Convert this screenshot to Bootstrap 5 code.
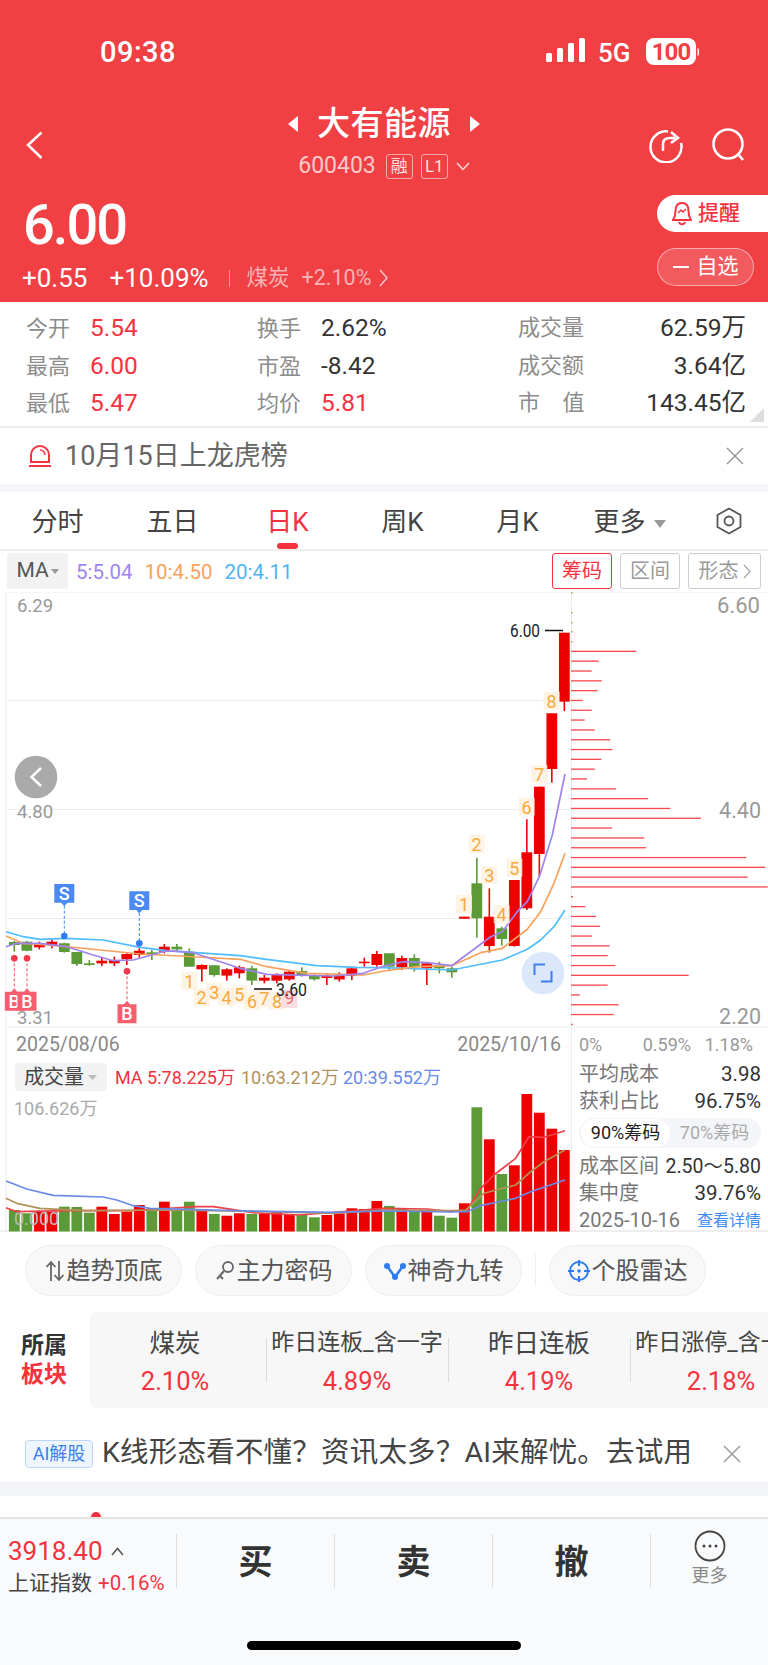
<!DOCTYPE html>
<html lang="zh-CN">
<head>
    <meta charset="UTF-8">
    <meta name="viewport" content="width=device-width, initial-scale=1.0">
    <title>大有能源</title>
    <link href="https://cdn.jsdelivr.net/npm/bootstrap@5.3.0/dist/css/bootstrap.min.css" rel="stylesheet">
    <style>
        body { width: 768px; height: 1665px; overflow: hidden; background: #fff; color: #333; font-family: Roboto, "Noto Sans CJK SC", sans-serif; }
        svg text { font-family: Roboto, "Noto Sans CJK SC", sans-serif; }
        .up { color: #f5333f; }
        .head-box { background: #f04044; color: #fff; height: 302px; }
        .status-row { height: 104px; padding: 34px 68px 0 100px; }
        .clock { font-size: 29px; font-weight: 500; line-height: 36px; letter-spacing: .5px; }
        .status-right { margin-top: 4px; }
        .net { font-size: 26px; font-weight: 500; line-height: 30px; margin: 0 14px 0 13px; width: 34px; }
        .nav-row { height: 86px; padding: 0 21px 0 26px; }
        .title-col { width: 250px; margin-top: -2px; }
        .stock-name { font-size: 33px; font-weight: 500; line-height: 44px; letter-spacing: .5px; margin: 0 19px; }
        .code-line { font-size: 23px; line-height: 26px; margin-top: 7px; color: rgba(255,255,255,.72); }
        .tag-box { display: inline-block; border: 1px solid rgba(255,255,255,.55); border-radius: 3px; height: 25px; width: 27px; font-size: 17px; line-height: 23px; text-align: center; margin-left: 8px; color: rgba(255,255,255,.85); }
        .price-row { height: 112px; }
        .big-price { font-size: 56px; font-weight: 500; line-height: 56px; letter-spacing: -2px; margin: 7px 0 0 23px; }
        .change-line { font-size: 26px; line-height: 30px; margin: 10px 0 0 22px; }
        .change-line .sector { font-size: 21.500px; color: rgba(255,255,255,.6); }
        .split { width: 1px; height: 17px; background: rgba(255,255,255,.45); margin: 0 17px 0 20px; }
        .remind-btn { width: 111px; height: 37px; margin: 5px 0 16px; background: #fff; color: #f5333f; border-radius: 19px 0 0 19px; font-size: 21px; font-weight: 500; padding-left: 15px; gap: 6px; }
        .pick-btn { width: 97px; height: 38px; margin-right: 14px; border: 1px solid rgba(255,255,255,.5); background: rgba(255,255,255,.14); border-radius: 19px; font-size: 21px; gap: 8px; }
        .dash-mark { width: 16px; height: 2px; background: #fff; }
        .stat-box { height: 126px; padding-top: 7px; border-bottom: 2px solid #eee; position: relative; font-size: 24.500px; }
        .stat-line { height: 37.500px; line-height: 37.500px; padding-left: 26px; }
        .stat-cell { width: 231px; }
        .stat-label { color: #8c8c8c; font-size: 22px; display: inline-block; width: 64px; }
        .stat-end { width: 228px; }
        .stat-end .stat-label { width: 68px; }
        .fold-mark { position: absolute; right: 4px; bottom: 4px; width: 0; height: 0; border-left: 14px solid transparent; border-bottom: 14px solid #ddd; }
        .notice-row { height: 56px; padding: 0 24px 0 29px; font-size: 27px; color: #666; }
        .gap-bar { background: #f3f5f8; }
        .tab-row { height: 59px; border-bottom: 2px solid #eee; font-size: 26px; color: #444; }
        .tab-item { width: 115px; text-align: center; position: relative; line-height: 60px; white-space: nowrap; }
        .tab-item.active { color: #f5333f; }
        .tab-item.active::after { content: ""; position: absolute; left: 47px; bottom: 0; width: 21px; height: 6px; border-radius: 3px; background: #f5333f; }
        .drop-mark { display: inline-block; width: 0; height: 0; border: 6px solid transparent; border-top: 8px solid #999; border-bottom: 0; vertical-align: middle; margin-left: 8px; }
        .more-tab { padding-right: 6px; }
        .tool-row { height: 41px; padding: 2px 7px 0; font-size: 20.500px; }
        .ma-text { line-height: 38px; margin-right: 12px; }
        .ma-box { width: 61px; height: 36px; background: #f2f2f2; border-radius: 3px; margin-right: 8px; font-size: 21px; color: #555; }
        .ma-box .drop-mark { border-width: 4px; border-top-width: 5px; border-bottom: 0; margin-left: 2px; }
        .mode-btn { height: 36px; width: 60px; margin-left: 8px; border: 1px solid #ccc; border-radius: 3px; color: #999; font-size: 20px; }
        .mode-btn.on { color: #f5333f; border-color: #f5333f; }
        .chart-svg { display: block; }
        .lower-row { height: 173px; border-bottom: 2px solid #eee; }
        .cost-panel { width: 197px; padding: 2px 7px 0 7px; font-size: 20.500px; color: #333; border-left: 1px solid #eee; }
        .cost-line { height: 27px; line-height: 27px; white-space: nowrap; }
        .cost-line span:first-child { color: #777; font-size: 20px; }
        .cost-line .cost-range { font-size: 19.500px; }
        .cost-line .cost-date { font-size: 21px; }
        .seg-box { height: 30px; background: #f3f5f8; border-radius: 15px; margin: 3px 0 5px; font-size: 18px; color: #aaa; padding: 1px 2px; }
        .seg-on { width: 89px; background: #fff; border-radius: 14px; color: #222; text-align: center; line-height: 27px; }
        .seg-off { flex: 1; text-align: center; line-height: 27px; }
        .chip-row { height: 80px; padding: 13px 0 0 25px; gap: 13px; }
        .chip-item { width: 157px; height: 51px; background: #f8f8f8; border: 1px solid #eee; border-radius: 26px; font-size: 24px; color: #555; gap: 2px; }
        .chip-split { width: 1px; height: 32px; background: #eee; margin-top: 9px; }
        .plate-row { height: 96px; }
        .plate-title { width: 90px; padding: 19px 0 0 21px; font-size: 23px; font-weight: 700; line-height: 29px; }
        .plate-box { flex: 1; background: #f7f7f7; border-radius: 8px 0 0 8px; overflow: hidden; padding-left: 0; }
        .plate-cell { flex: 0 0 182px; width: 182px; text-align: center; white-space: nowrap; position: relative; padding-top: 14px; }
        .plate-cell:first-child { margin-left: -6px; }
        .plate-cell + .plate-cell::before { content: ""; position: absolute; left: 0; top: 26px; height: 44px; width: 1px; background: #ddd; }
        .plate-name { font-size: 25.500px; line-height: 34px; color: #444; }
        .plate-name.tight { font-size: 23px; }
        .plate-pct { font-size: 25.500px; line-height: 36px; margin-top: 3px; }
        .ai-row { height: 74px; padding: 17px 27px 0 25px; }
        .ai-tag { width: 68px; height: 28px; border: 1px solid #bcd6fb; background: #eef5ff; color: #3a7ff0; border-radius: 4px; font-size: 18px; margin-right: 9px; }
        .ai-text { font-size: 28.500px; color: #444; flex: 1; white-space: nowrap; overflow: hidden; letter-spacing: .2px; }
        .dock-gap { height: 21px; position: relative; }
        .dock-dot { position: absolute; left: 91px; bottom: 0; width: 10px; height: 5px; border-radius: 5px 5px 0 0; background: #f5333f; }
        .dock-bar { height: 148px; background: #f9fafc; border-top: 2px solid #e4e4e8; padding-top: 15px; }
        .dock-cols { height: 54px; }
        .index-col { width: 176px; padding-left: 8px; white-space: nowrap; }
        .index-num { font-size: 26px; line-height: 30px; margin-top: 2px; }
        .index-sub { font-size: 21px; line-height: 30px; margin-top: 2px; color: #444; }
        .index-sub .up { font-size: 20.500px; margin-left: 6px; }
        .trade-col { width: 158px; border-left: 1px solid #ddd; text-align: center; font-size: 34px; font-weight: 700; line-height: 56px; color: #333; }
        .more-col { flex: 1; border-left: 1px solid #ddd; text-align: center; font-size: 18px; color: #888; margin-left: 0; }
        .home-bar { width: 274px; height: 9px; border-radius: 5px; background: #000; margin: 53px 0 0 247px; }
    </style>
</head>
<body>
    <div class="head-box">
        <div class="status-row d-flex justify-content-between">
            <div class="clock">09:38</div>
            <div class="d-flex align-items-start status-right">
                <svg width="39" height="24" viewBox="0 0 39 24" class="flex-shrink-0"><g fill="#fff"><rect x="0" y="15" width="6" height="9" rx="1.500"/><rect x="11" y="10" width="6" height="14" rx="1.500"/><rect x="22" y="5" width="6" height="19" rx="1.500"/><rect x="33" y="0" width="6" height="24" rx="1.500"/></g></svg>
                <div class="net">5G</div>
                <svg width="54" height="28" viewBox="0 0 54 28"><rect x="0" y="0" width="50" height="27" rx="8" fill="#fff"/><text x="25" y="21.500" text-anchor="middle" font-size="24" font-weight="700" fill="#f04044" letter-spacing="-1">100</text><path d="M51.500 9.500c2 1 2.500 7 0 9z" fill="#fff"/></svg>
            </div>
        </div>
        <div class="nav-row d-flex">
            <svg width="17" height="28" viewBox="0 0 17 28" class="flex-shrink-0" style="margin-top:27px"><path d="M15.500 1.500 2 14l13.500 13" fill="none" stroke="#fff" stroke-width="2.500"/></svg>
            <div class="title-col flex-shrink-0 text-center" style="margin-left:216px">
                <div class="d-flex align-items-center justify-content-center">
                    <svg width="10" height="16"><path d="M10 0v16L0 8z" fill="#fff"/></svg>
                    <div class="stock-name">大有能源</div>
                    <svg width="10" height="16"><path d="M0 0v16l10-8z" fill="#fff"/></svg>
                </div>
                <div class="code-line d-flex align-items-center justify-content-center">600403<span class="tag-box" style="margin-left:10px">融</span><span class="tag-box">L1</span>
                    <svg width="14" height="9" class="ms-2"><path d="M1 1l6 6.500L13 1" fill="none" stroke="#fff" stroke-opacity=".8" stroke-width="1.500"/></svg>
                </div>
            </div>
            <div class="ms-auto d-flex" style="padding-top:23px;gap:27px">
                <svg width="36" height="36" viewBox="0 0 36 36"><path d="M20 3.500A15.500 15.500 0 1 0 33 15" fill="none" stroke="#fff" stroke-width="2.500" transform="translate(0 1)"/><path d="M15 24v-7c0-4 3-6 7-6h5M23 5l7 6-7 5" fill="none" stroke="#fff" stroke-width="2.500"/></svg>
                <svg width="36" height="36" viewBox="0 0 36 36"><circle cx="17" cy="17" r="14.500" fill="none" stroke="#fff" stroke-width="2.600"/><path d="M27 27l5 6" stroke="#fff" stroke-width="2.600"/></svg>
            </div>
        </div>
        <div class="price-row d-flex justify-content-between">
            <div>
                <div class="big-price">6.00</div>
                <div class="change-line d-flex align-items-center">+0.55<span style="margin-left:22px">+10.09%</span><span class="split"></span><span class="sector">煤炭</span><span class="sector" style="margin-left:12px">+2.10%</span>
                    <svg width="10" height="18" class="ms-2"><path d="M1 1l7 8-7 8" fill="none" stroke="#fff" stroke-opacity=".7" stroke-width="1.500"/></svg>
                </div>
            </div>
            <div class="d-flex flex-column align-items-end">
                <div class="remind-btn d-flex align-items-center">
                    <svg width="20" height="26" viewBox="0 0 20 26"><path d="M10 2c5 0 6.500 4 6.500 8s.5 6 2.500 9H1c2-3 2.500-5 2.500-9S5 2 10 2z" fill="none" stroke="#f5333f" stroke-width="2"/><path d="M6 12l3-3 2 2 3-3" fill="none" stroke="#f5333f" stroke-width="1.500"/><path d="M7 21c1 3 5 3 6 0" fill="none" stroke="#f5333f" stroke-width="2"/></svg>
                    <span>提醒</span>
                </div>
                <div class="pick-btn d-flex align-items-center justify-content-center"><span class="dash-mark"></span><span>自选</span></div>
            </div>
        </div>
    </div>

    <div class="stat-box">
        <div class="stat-line d-flex">
            <div class="stat-cell"><span class="stat-label">今开</span><span class="up">5.54</span></div>
            <div class="stat-cell" style="width:261px"><span class="stat-label">换手</span><span>2.62%</span></div>
            <div class="stat-end d-flex justify-content-between"><span class="stat-label">成交量</span><span>62.59万</span></div>
        </div>
        <div class="stat-line d-flex">
            <div class="stat-cell"><span class="stat-label">最高</span><span class="up">6.00</span></div>
            <div class="stat-cell" style="width:261px"><span class="stat-label">市盈</span><span>-8.42</span></div>
            <div class="stat-end d-flex justify-content-between"><span class="stat-label">成交额</span><span>3.64亿</span></div>
        </div>
        <div class="stat-line d-flex">
            <div class="stat-cell"><span class="stat-label">最低</span><span class="up">5.47</span></div>
            <div class="stat-cell" style="width:261px"><span class="stat-label">均价</span><span class="up">5.81</span></div>
            <div class="stat-end d-flex justify-content-between"><span class="stat-label">市&emsp;值</span><span>143.45亿</span></div>
        </div>
        <span class="fold-mark"></span>
    </div>

    <div class="notice-row d-flex align-items-center">
        <svg width="22" height="24" viewBox="0 0 22 24" class="flex-shrink-0" style="margin-right:14px"><path d="M2 18V11a9 9 0 0 1 18 0v7z" fill="none" stroke="#f5333f" stroke-width="2"/><path d="M0 22h22" stroke="#f5333f" stroke-width="2"/><path d="M11 6a5 5 0 0 1 5 5" fill="none" stroke="#f5333f" stroke-width="1.500"/></svg>
        <span>10月15日上龙虎榜</span>
        <svg width="18" height="18" class="ms-auto"><path d="M1 1l16 16M17 1 1 17" stroke="#999" stroke-width="1.500"/></svg>
    </div>
    <div class="gap-bar" style="height:8px"></div>

    <div class="tab-row d-flex">
        <div class="tab-item">分时</div>
        <div class="tab-item">五日</div>
        <div class="tab-item active">日K</div>
        <div class="tab-item">周K</div>
        <div class="tab-item">月K</div>
        <div class="tab-item more-tab">更多<span class="drop-mark"></span></div>
        <div class="flex-fill d-flex align-items-center justify-content-center">
            <svg width="26" height="28" viewBox="0 0 26 28"><path d="M13 1.500 24.500 8v12L13 26.500 1.500 20V8z" fill="none" stroke="#555" stroke-width="1.800" stroke-linejoin="round"/><circle cx="13" cy="14" r="4.500" fill="none" stroke="#555" stroke-width="1.800"/></svg>
        </div>
    </div>

    <div class="tool-row d-flex align-items-start">
        <div class="ma-box d-flex align-items-center justify-content-center">MA<span class="drop-mark"></span></div>
        <span class="ma-text" style="color:#a084ee">5:5.04</span>
        <span class="ma-text" style="color:#f7a15c">10:4.50</span>
        <span class="ma-text" style="color:#4fb4f5">20:4.11</span>
        <div class="ms-auto d-flex">
            <div class="mode-btn on d-flex align-items-center justify-content-center">筹码</div>
            <div class="mode-btn d-flex align-items-center justify-content-center">区间</div>
            <div class="mode-btn d-flex align-items-center justify-content-center" style="width:73px">形态
                <svg width="8" height="15" class="ms-1"><path d="M1 1l6 6.500L1 14" fill="none" stroke="#aaa" stroke-width="1.300"/></svg>
            </div>
        </div>
    </div>

    <svg id="mainChart" class="chart-svg" width="768" height="467" viewBox="0 592 768 467"></svg>

    <div class="lower-row d-flex">
        <svg id="volChart" class="chart-svg flex-shrink-0" width="571" height="173" viewBox="0 1059 571 173"></svg>
        <div class="cost-panel flex-fill">
            <div class="cost-line d-flex justify-content-between"><span>平均成本</span><span>3.98</span></div>
            <div class="cost-line d-flex justify-content-between"><span>获利占比</span><span>96.75%</span></div>
            <div class="seg-box d-flex"><div class="seg-on">90%筹码</div><div class="seg-off">70%筹码</div></div>
            <div class="cost-line d-flex justify-content-between"><span>成本区间</span><span class="cost-range">2.50～5.80</span></div>
            <div class="cost-line d-flex justify-content-between"><span>集中度</span><span>39.76%</span></div>
            <div class="cost-line d-flex justify-content-between align-items-center"><span class="cost-date">2025-10-16</span><span style="color:#3f8cf3;font-size:16px">查看详情</span></div>
        </div>
    </div>

    <div class="chip-row d-flex">
        <div class="chip-item d-flex align-items-center justify-content-center">
            <svg width="20" height="24" viewBox="0 0 20 24"><path d="M6 22V3M1.500 8 6 3l4.500 5M14 2v19M9.500 16l4.500 5 4.500-5" fill="none" stroke="#666" stroke-width="1.800"/></svg>
            <span>趋势顶底</span>
        </div>
        <div class="chip-item d-flex align-items-center justify-content-center">
            <svg width="20" height="24" viewBox="0 0 20 24"><circle cx="13" cy="8" r="5" fill="none" stroke="#666" stroke-width="1.800"/><path d="M9 12 2 20M5 17l3 3" stroke="#666" stroke-width="2"/></svg>
            <span>主力密码</span>
        </div>
        <div class="chip-item d-flex align-items-center justify-content-center">
            <svg width="22" height="20" viewBox="0 0 22 20"><path d="M3 5l8 11 8-11" fill="none" stroke="#2f7bef" stroke-width="2.500"/><g fill="#2f7bef"><circle cx="3" cy="5" r="3"/><circle cx="19" cy="5" r="3"/><circle cx="11" cy="16" r="3"/></g></svg>
            <span>神奇九转</span>
        </div>
        <div class="chip-split"></div>
        <div class="chip-item d-flex align-items-center justify-content-center">
            <svg width="22" height="24" viewBox="0 0 22 24"><circle cx="11" cy="12" r="9" fill="none" stroke="#2f7bef" stroke-width="2"/><path d="M11 1v6M11 17v6M0 12h6M16 12h6" stroke="#2f7bef" stroke-width="2"/><circle cx="11" cy="12" r="1.800" fill="#2f7bef"/></svg>
            <span>个股雷达</span>
        </div>
    </div>

    <div class="plate-row d-flex">
        <div class="plate-title">所属<div class="up">板块</div></div>
        <div class="plate-box d-flex">
            <div class="plate-cell"><div class="plate-name">煤炭</div><div class="plate-pct up">2.10%</div></div>
            <div class="plate-cell"><div class="plate-name tight">昨日连板_含一字</div><div class="plate-pct up">4.89%</div></div>
            <div class="plate-cell"><div class="plate-name">昨日连板</div><div class="plate-pct up">4.19%</div></div>
            <div class="plate-cell"><div class="plate-name tight">昨日涨停_含一字</div><div class="plate-pct up">2.18%</div></div>
        </div>
    </div>

    <div class="ai-row d-flex align-items-center">
        <div class="ai-tag d-flex align-items-center justify-content-center flex-shrink-0">AI解股</div>
        <div class="ai-text">K线形态看不懂？资讯太多？AI来解忧。去试用</div>
        <svg width="18" height="18" class="flex-shrink-0"><path d="M1 1l16 16M17 1 1 17" stroke="#999" stroke-width="1.500"/></svg>
    </div>
    <div class="gap-bar" style="height:14px"></div>
    <div class="dock-gap"><span class="dock-dot"></span></div>

    <div class="dock-bar">
        <div class="dock-cols d-flex">
            <div class="index-col">
                <div class="index-num up d-flex align-items-center">3918.40
                    <svg width="13" height="9" class="ms-2"><path d="M1 8l5.500-6.500L12 8" fill="none" stroke="#555" stroke-width="1.500"/></svg>
                </div>
                <div class="index-sub">上证指数<span class="up">+0.16%</span></div>
            </div>
            <div class="trade-col">买</div>
            <div class="trade-col">卖</div>
            <div class="trade-col">撤</div>
            <div class="more-col">
                <svg width="32" height="32" viewBox="0 0 32 32" class="d-block mx-auto" style="margin-top:-4px"><circle cx="16" cy="16" r="14.500" fill="none" stroke="#444" stroke-width="1.800"/><g fill="#444"><circle cx="10" cy="16" r="1.500"/><circle cx="16" cy="16" r="1.500"/><circle cx="22" cy="16" r="1.500"/></g></svg>
                <div>更多</div>
            </div>
        </div>
        <div class="home-bar"></div>
    </div>

    <script src="https://cdn.jsdelivr.net/npm/bootstrap@5.3.0/dist/js/bootstrap.bundle.min.js"></script>
    <script>
        // zoom-measured values: x is in 1/3 px, y is in 1/3 px from the crop top
        const RED = '#ee0000', GREEN = '#5b9a36';
        const mainY = z => 590 + z / 3;
        const volY = z => 1040 + z / 3;
        const candleX = i => 14.33 + 12.5 * i;

        // [body top, body bottom, wick top, wick bottom, rising]
        const candles = [
            [1056,1065,1053,1085,0],[1055,1082,1053,1084,0],[1062,1072,1055,1078,1],[1055,1065,1050,1075,1],
            [1060,1086,1058,1088,0],[1086,1122,1086,1128,0],[1120,1125,1110,1127,0],[1112,1120,1103,1128,1],
            [1110,1120,1100,1128,1],[1092,1108,1090,1125,1],[1082,1095,1075,1103,1],[1087,1095,1080,1110,0],
            [1070,1085,1062,1090,1],[1070,1078,1062,1085,0],[1085,1130,1075,1130,0],[1125,1138,1123,1175,1],
            [1126,1155,1126,1160,0],[1138,1157,1135,1172,1],[1132,1150,1127,1165,1],[1135,1172,1128,1185,0],
            [1163,1172,1155,1180,1],[1155,1172,1150,1180,1],[1145,1168,1140,1172,1],[1143,1157,1132,1160,0],
            [1155,1168,1150,1172,0],[1157,1164,1150,1185,1],[1157,1168,1147,1175,1],[1135,1157,1133,1170,1],
            [1115,1119,1103,1130,1],[1092,1125,1083,1130,1],[1090,1130,1090,1140,0],[1104,1132,1097,1140,1],
            [1104,1132,1093,1145,0],[1120,1135,1118,1185,1],[1125,1135,1115,1150,0],[1135,1147,1130,1163,0],
            [980,986,980,986,1],[880,985,803,1043,0],[980,1068,895,1088,1],[1015,1047,1010,1067,0],
            [870,1068,870,1070,1],[787,955,688,960,1],[590,792,590,860,1],[370,537,370,578,1],[128,335,128,363,1]
        ];
        const volTops = [510,520,515,515,500,501,518,500,522,515,495,512,485,510,485,510,522,527,520,522,520,515,522,525,532,525,520,505,507,483,498,505,512,512,527,533,490,202,298,402,376,162,218,266,330];

        const lineBlue = [[18,1025],[70,1040],[120,1048],[200,1045],[310,1050],[420,1072],[500,1082],[720,1097],[800,1108],[950,1127],[1070,1132],[1152,1133],[1355,1140],[1507,1110],[1582,1078],[1622,1050],[1662,1010],[1695,960]];
        const lineOrange = [[18,1038],[70,1060],[120,1063],[200,1070],[300,1080],[420,1092],[540,1098],[720,1108],[800,1130],[920,1150],[1090,1155],[1152,1143],[1252,1130],[1355,1127],[1442,1088],[1507,1075],[1582,1018],[1622,965],[1662,880],[1695,790]];
        const linePurple = [[18,1070],[50,1060],[120,1060],[200,1070],[280,1095],[340,1112],[400,1110],[500,1082],[580,1088],[720,1135],[800,1153],[1000,1158],[1090,1150],[1152,1128],[1212,1115],[1282,1118],[1355,1127],[1472,1040],[1507,1025],[1552,965],[1582,935],[1618,860],[1657,735],[1695,552]];

        const volBlue = [[18,423],[80,447],[160,466],[310,471],[350,480],[400,497],[450,505],[700,512],[1000,517],[1152,513],[1352,516],[1402,515],[1442,497],[1547,475],[1592,455],[1695,420]];
        const volBrown = [[18,475],[50,490],[120,505],[250,512],[500,510],[800,515],[1000,520],[1152,510],[1352,512],[1397,510],[1452,460],[1547,435],[1592,395],[1632,365],[1695,330]];
        const volRed = [[18,503],[50,515],[200,512],[400,512],[590,500],[640,500],[760,518],[900,525],[1152,505],[1282,507],[1352,515],[1402,510],[1442,445],[1482,405],[1547,355],[1587,290],[1632,292],[1695,272]];

        // price profile rows: right end of each bar, 29.45 apart
        const profile = [758,645,624,654,642,597,624,603,633,680,686,653,633,610,697,793,860,952,685,782,787,1088,1145,1092,1152,568,605,637,649,625,678,672,695,915,672,588,705,690,567];

        const nines = [[568,1172,1],[605,1222,2],[643,1205,3],[680,1220,4],[718,1213,5],[756,1232,6],[793,1225,7],[831,1232,8],
                       [1392,942,1],[1430,762,2],[1468,855,3],[1505,973,4],[1543,833,5],[1580,650,6],[1618,552,7],[1655,332,8]];

        const pts = (list, toY) => list.map(p => (p[0] / 3).toFixed(1) + ',' + toY(p[1]).toFixed(1)).join(' ');
        const poly = (list, toY, color) => `<polyline points="${pts(list, toY)}" fill="none" stroke="${color}" stroke-width="1.700" stroke-linejoin="round"/>`;
        const label = (x, y, str, size, color, anchor, extra) => `<text x="${x}" y="${y}" font-size="${size}" fill="${color}" text-anchor="${anchor || 'start'}" ${extra || ''}>${str}</text>`;

        let main = '';
        // frame and grid
        main += '<path d="M6 592H768M6 700.500H571M6 809.500H571M6 918.500H571M6 1027H768M6 592V1059M571.500 592V1059" stroke="#eee" fill="none"/>';
        main += label(17, 612, '6.29', 18.5, '#999') + label(17, 818, '4.80', 18.5, '#999') + label(17, 1024, '3.31', 18.5, '#999');
        main += label(760, 613, '6.60', 22, '#999', 'end') + label(761, 818, '4.40', 21.5, '#999', 'end') + label(761, 1024, '2.20', 21.5, '#999', 'end');
        // small green ticks at the top of the axis line
        [592, 612, 622, 631, 641].forEach(y => { main += `<rect x="571" y="${y}" width="1.500" height="1.500" fill="#7cb55a"/>`; });
        // profile bars
        profile.forEach((end, i) => {
            const y = 590 + (184 + 29.45 * i) / 3;
            main += `<rect x="571" y="${(y - .6).toFixed(1)}" width="${((end - 562) / 3).toFixed(1)}" height="1.300" fill="#f8474e"/>`;
        });
        // candles
        candles.forEach((c, i) => {
            const x = candleX(i), col = c[4] ? RED : GREEN;
            main += `<rect x="${x - .8}" y="${mainY(c[2]).toFixed(1)}" width="1.600" height="${((c[3] - c[2]) / 3).toFixed(1)}" fill="${col}"/>`;
            main += `<rect x="${x - 5.4}" y="${mainY(c[0]).toFixed(1)}" width="10.800" height="${Math.max((c[1] - c[0]) / 3, 1.500).toFixed(1)}" fill="${col}"/>`;
        });
        main += poly(lineBlue, mainY, '#4fbdff') + poly(lineOrange, mainY, '#f7a15c') + poly(linePurple, mainY, '#a084ee');
        // nine-turn labels
        nines.forEach(n => {
            const x = n[0] / 3, y = mainY(n[1]);
            main += `<rect x="${x - 8}" y="${y - 9}" width="16" height="18" fill="#fdf1e0" fill-opacity=".8"/>`;
            main += label(x, y + 7, n[2], 18, '#f8a93c', 'middle');
        });
        main += `<rect x="281.300" y="990" width="16" height="18" fill="#fbdfe0"/>` + label(289.300, 1004, '9', 18, '#ef6b73', 'middle');
        // high and low marks
        main += '<path d="M254 989h18M545 630.500h18" stroke="#111" stroke-width="1.500"/>';
        main += label(276, 996, '3.60', 17.5, '#222', 'start', 'textLength="31" lengthAdjust="spacingAndGlyphs"') + label(510, 637, '6.00', 17.5, '#222', 'start', 'textLength="30" lengthAdjust="spacingAndGlyphs"');
        // buy and sell marks
        [[64.300, 882, 938, 1038, 'S'], [139.300, 904, 960, 1060, 'S']].forEach(m => {
            const x = m[0], top = mainY(m[1]), bot = mainY(m[2]), dot = mainY(m[3]);
            main += `<path d="M${x} ${bot + 3}V${dot}" stroke="#3f86f5" stroke-dasharray="3 2"/><circle cx="${x}" cy="${dot}" r="3.300" fill="#2f7bef"/>`;
            main += `<path d="M${x - 10} ${top}h20v${bot - top}h-7l-3 3.500-3-3.500h-7z" fill="#4a8af2"/>` + label(x, top + 15.500, m[4], 18, '#fff', 'middle', 'font-weight="500"');
        });
        [[14.300, 1105, 1205], [27, 1105, 1205], [127, 1144, 1243]].forEach(m => {
            const x = m[0], dot = mainY(m[1]), top = mainY(m[2]);
            main += `<path d="M${x} ${dot}V${top - 3}" stroke="#f4505f" stroke-dasharray="3 2"/><circle cx="${x}" cy="${dot}" r="3.300" fill="#f0384a"/>`;
            main += `<path d="M${x - 9.500} ${top}h6.500l3-3.500 3 3.500h6.500v19h-19z" fill="#f85f6e"/>` + label(x, top + 16, 'B', 18, '#fff', 'middle', 'font-weight="500"');
        });
        // floating buttons
        main += '<circle cx="36" cy="777" r="21.300" fill="#aaa"/><path d="M41 768l-9.500 9 9.500 9" fill="none" stroke="#fff" stroke-width="2.500"/>';
        main += '<circle cx="543" cy="973" r="21.300" fill="#dbe7fa"/><path d="M534.500 975v-10.500h10.500M551.500 971v10.500h-10.500" fill="none" stroke="#3f7ff0" stroke-width="2"/>';
        // axis labels
        main += label(16, 1051, '2025/08/06', 19.5, '#888') + label(561, 1051, '2025/10/16', 19.5, '#888', 'end');
        main += label(579, 1051, '0%', 18, '#999') + label(691, 1051, '0.59%', 18, '#999', 'end') + label(753, 1051, '1.18%', 18, '#999', 'end');
        document.getElementById('mainChart').innerHTML = main;

        let vol = '<path d="M6 1059V1232" stroke="#eee"/>';
        vol += '<rect x="15" y="1063" width="92" height="28" rx="3" fill="#f2f2f2"/>' + label(24, 1084, '成交量', 20, '#444');
        vol += '<path d="M88 1075h9l-4.500 5z" fill="#bbb"/>';
        vol += label(115, 1084, 'MA 5:78.225万', 18, '#ee3340') + label(241, 1084, '10:63.212万', 18, '#b49257') + label(343, 1084, '20:39.552万', 18, '#6a8ae8');
        vol += label(14, 1115, '106.626万', 18, '#aaa');
        volTops.forEach((t, i) => {
            vol += `<rect x="${candleX(i) - 5.400}" y="${volY(t).toFixed(1)}" width="10.800" height="${(1231.5 - volY(t)).toFixed(1)}" fill="${candles[i][4] ? RED : GREEN}"/>`;
        });
        vol += label(14, 1225, '0.000', 18, '#bbb');
        vol += poly(volRed, volY, '#ee4048') + poly(volBrown, volY, '#b49257') + poly(volBlue, volY, '#6a8ae8');
        document.getElementById('volChart').innerHTML = vol;
    </script>
</body>
</html>
